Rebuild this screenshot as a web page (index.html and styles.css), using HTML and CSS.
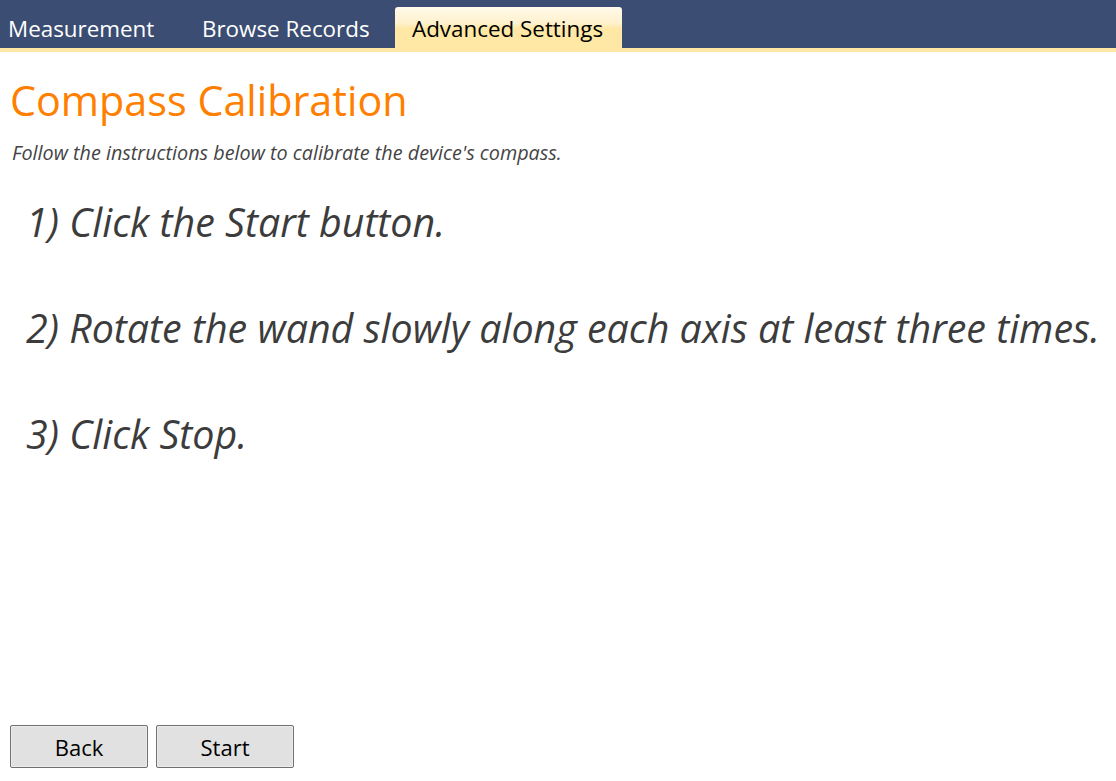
FILE: index.html
```html
<!DOCTYPE html>
<html>
<head>
<meta charset="utf-8">
<link rel="stylesheet" href="styles.css">
</head>
<body>
<div class="app">
  <nav class="tabbar">
    <div class="tab tab-measure">Measurement</div>
    <div class="tab tab-browse">Browse Records</div>
    <div class="tab active">Advanced Settings</div>
  </nav>
  <div class="strip"></div>
  <main class="content">
    <h1 class="title">Compass Calibration</h1>
    <p class="subtitle">Follow the instructions below to calibrate the device's compass.</p>
    <ol class="steps">
      <li>1) Click the Start button.</li>
      <li>2) Rotate the wand slowly along each axis at least three times.</li>
      <li>3) Click Stop.</li>
    </ol>
  </main>
  <footer class="actions">
    <button class="btn">Back</button>
    <button class="btn">Start</button>
  </footer>
</div>
</body>
</html>
```
FILE: styles.css
```css
html, body {
  margin: 0;
  padding: 0;
  background: #ffffff;
}
body {
  font-family: "Open Sans", "Liberation Sans", sans-serif;
}
.app {
  width: 1116px;
  height: 781px;
  display: flex;
  flex-direction: column;
  overflow: hidden;
}
.tabbar {
  height: 48px;
  background: #3b4d72;
  display: flex;
  align-items: flex-end;
}
.tab {
  height: 41px;
  box-sizing: border-box;
  color: #ffffff;
  font-size: 22.4px;
  line-height: 44px;
  white-space: nowrap;
}
.tab-measure {
  width: 194px;
  padding-left: 8px;
}
.tab-browse {
  width: 201px;
  padding-left: 8px;
}
.tab.active {
  width: 227px;
  padding-left: 17px;
  color: #000000;
  background: linear-gradient(to bottom, #fffaeb 0%, #fff1cc 40%, #ffe8a6 52%, #ffe8a6 100%);
  border-radius: 3px 3px 0 0;
}
.strip {
  height: 4px;
  background: #ffe8a6;
}
.content {
  flex: 1;
  padding: 0 0 0 10px;
}
.title {
  margin: 22px 0 0 0;
  font-size: 41.3px;
  font-weight: 400;
  color: #ff7f00;
  line-height: 52px;
}
.subtitle {
  margin: 16px 0 0 2px;
  font-size: 19.8px;
  font-style: italic;
  color: #444444;
  line-height: 22px;
}
.steps {
  list-style: none;
  margin: 33px 0 0 16px;
  padding: 0;
}
.steps li {
  font-size: 39.4px;
  font-style: italic;
  color: #3c3c3c;
  line-height: 50px;
  margin-bottom: 56px;
  white-space: nowrap;
}
.actions {
  display: flex;
  gap: 8px;
  padding: 0 0 13px 10px;
}
.btn {
  width: 138px;
  height: 43px;
  background: #e1e1e1;
  border: 1px solid #707070;
  border-radius: 2px;
  box-shadow: inset 0 0 0 1px #ececec;
  font-family: "Open Sans", "Liberation Sans", sans-serif;
  font-size: 22px;
  color: #000000;
  padding: 0;
}
```
